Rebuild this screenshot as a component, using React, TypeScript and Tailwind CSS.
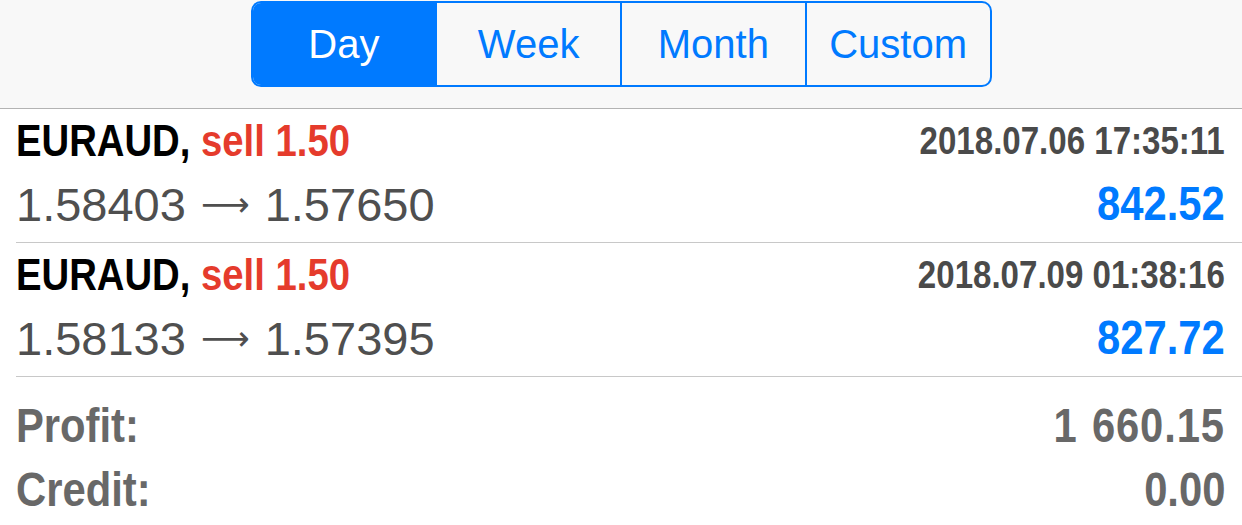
import React from 'react';

const bold = { fontFamily: '"Liberation Sans", Arial, sans-serif' };
const sans = { fontFamily: '"Liberation Sans", Arial, sans-serif' };
const arrowFont = { fontFamily: '"DejaVu Sans", "Noto Sans", sans-serif' };

interface Deal {
    symbol: string;
    side: string;
    time: string;
    open: string;
    close: string;
    profit: string;
}

const deals: Deal[] = [
    { symbol: 'EURAUD,', side: 'sell 1.50', time: '2018.07.06 17:35:11', open: '1.58403', close: '1.57650', profit: '842.52' },
    { symbol: 'EURAUD,', side: 'sell 1.50', time: '2018.07.09 01:38:16', open: '1.58133', close: '1.57395', profit: '827.72' },
];

const tabs = ['Day', 'Week', 'Month', 'Custom'];

function Segmented() {
    return (
        <div className="flex w-[741px] h-[86px] mt-px rounded-[10px] border-2 border-[#007aff] overflow-hidden" style={sans}>
            {tabs.map((t, i) => (
                <div
                    key={t}
                    className={
                        i === 0
                            ? 'flex-1 flex items-center justify-center bg-[#007aff] text-white text-[40px]'
                            : 'flex-1 flex items-center justify-center border-l-2 border-[#007aff] text-[#007aff] text-[40px]'
                    }>
                    {t}
                </div>
            ))}
        </div>
    );
}

// condensed bold look: Liberation Sans Bold squeezed horizontally
function Narrow({ children, className, right }: { children: React.ReactNode; className?: string; right?: boolean }) {
    return (
        <span
            className={`inline-block whitespace-nowrap font-bold leading-none scale-x-[0.87] ${right ? 'origin-right' : 'origin-left'} ${className ?? ''}`}
            style={bold}>
            {children}
        </span>
    );
}

function DealRow({ deal }: { deal: Deal }) {
    return (
        <div className="ml-4 pr-[17px] pb-[7px] border-b border-[#c8c8c8]">
            <div className="flex items-center justify-between h-[64px]">
                <Narrow className="text-[44px]">
                    <span className="text-black">{deal.symbol}</span>{' '}
                    <span className="text-[#e53b2c]">{deal.side}</span>
                </Narrow>
                <Narrow right className="text-[38px] text-[#4a4a4a]">
                    {deal.time}
                </Narrow>
            </div>
            <div className="flex items-center justify-between h-[62px]">
                <div className="flex items-center text-[47px] text-[#4f4f4f] leading-none whitespace-nowrap" style={sans}>
                    <span>{deal.open}</span>
                    <span className="mx-[15px] text-[34px]" style={arrowFont}>⟶</span>
                    <span>{deal.close}</span>
                </div>
                <Narrow right className="text-[48px] text-[#007aff]">
                    {deal.profit}
                </Narrow>
            </div>
        </div>
    );
}

export default function App() {
    return (
        <div className="w-[1242px] h-[525px] bg-white overflow-hidden">
            <header className="h-[109px] bg-[#f8f8f8] border-b border-[#b3b3b3] flex justify-center">
                <Segmented />
            </header>
            <main>
                {deals.map((d, i) => <DealRow key={i} deal={d} />)}
                <div className="pl-4 pr-[17px] pt-[17px] text-[48px] text-[#686868]">
                    <div className="flex items-center justify-between h-[64px]">
                        <Narrow>Profit:</Narrow>
                        <Narrow right className="tracking-[1px] [word-spacing:2px]">1 660.15</Narrow>
                    </div>
                    <div className="flex items-center justify-between h-[64px]">
                        <Narrow>Credit:</Narrow>
                        <Narrow right>0.00</Narrow>
                    </div>
                </div>
            </main>
        </div>
    );
}
